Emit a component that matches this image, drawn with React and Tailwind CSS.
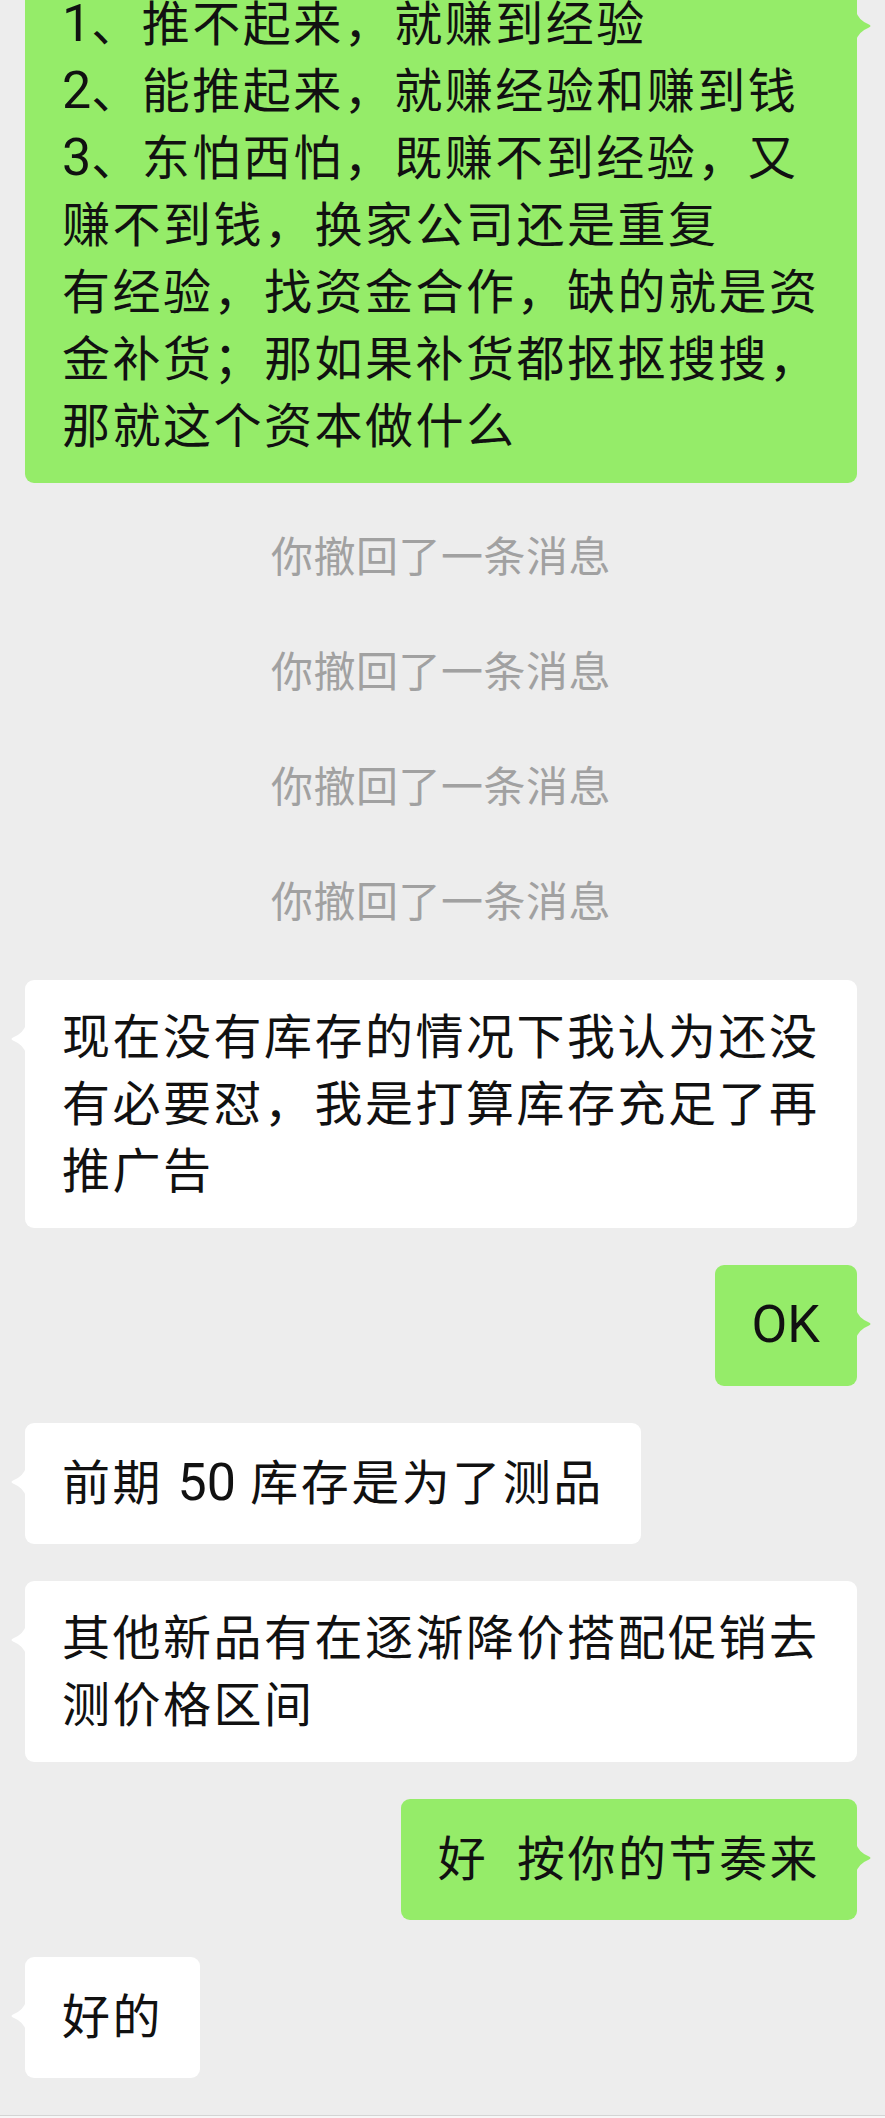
import React from "react";

// bubble tail, drawn as a little concave arrow
function Tail({ mine }) {
  if (mine) {
    return (
      <svg className="absolute top-[44px] -right-[15px]" width="16" height="30" viewBox="0 0 16 30">
        <path d="M0 0 Q2 9 13 13.5 Q16 15 13 16.5 Q2 21 0 30 Z" fill="#95ec69" />
      </svg>
    );
  }
  return (
    <svg className="absolute top-[44px] -left-[15px]" width="16" height="30" viewBox="0 0 16 30">
      <path d="M16 0 Q14 9 3 13.5 Q0 15 3 16.5 Q14 21 16 30 Z" fill="#ffffff" />
    </svg>
  );
}

// latin runs are a touch bigger and not spaced out
function L({ children }) {
  return <span className="text-[52px] leading-none tracking-normal">{children}</span>;
}

function Bubble({ mine, single, className = "", children }) {
  return (
    <div
      className={`relative max-w-[834px] rounded-[9px] px-[37px] py-[23.5px] text-[48px] leading-[67px] tracking-[2.5px] text-[#111111] ${
        mine ? "self-end bg-[#95ec69]" : "self-start bg-white"
      } ${single ? "min-h-[121px] flex items-center" : ""} ${className}`}
    >
      <Tail mine={mine} />
      {single ? <div>{children}</div> : children}
    </div>
  );
}

function Recalled() {
  return (
    <div className="h-[115px] flex items-center justify-center text-[42px] tracking-[0.5px] text-[#a1a1a1]">
      你撤回了一条消息
    </div>
  );
}

export default function App() {
  return (
    <div className="w-full overflow-hidden bg-[#ededed] font-['Roboto','Noto_Sans_CJK_SC',sans-serif]">
      <div className="flex flex-col pl-[25px] pr-[28px]">
        {/* top message, cut off by the screen edge */}
        <Bubble mine className="-mt-[33px]">
          <div>
            <L>1</L>、推不起来，就赚到经验
          </div>
          <div>
            <L>2</L>、能推起来，就赚经验和赚到钱
          </div>
          <div>
            <L>3</L>、东怕西怕，既赚不到经验，又赚不到钱，换家公司还是重复
          </div>
          <div>有经验，找资金合作，缺的就是资金补货；那如果补货都抠抠搜搜，那就这个资本做什么</div>
        </Bubble>

        <div className="mt-[17px] mb-[20px] flex flex-col">
          <Recalled />
          <Recalled />
          <Recalled />
          <Recalled />
        </div>

        <Bubble>现在没有库存的情况下我认为还没有必要怼，我是打算库存充足了再推广告</Bubble>

        <Bubble mine single className="mt-[37px]">
          <L>OK</L>
        </Bubble>

        <Bubble single className="mt-[37px]">
          前期 <L>50</L> 库存是为了测品
        </Bubble>

        <Bubble className="mt-[37px]">其他新品有在逐渐降价搭配促销去测价格区间</Bubble>

        <Bubble mine single className="mt-[37px]">
          {"好\u00a0\u00a0按你的节奏来"}
        </Bubble>

        <Bubble single className="mt-[37px] mb-[37px]">
          好的
        </Bubble>
      </div>

      {/* input bar edge */}
      <div className="h-[3px] border-t border-[#d4d4d4] bg-[#f7f7f7]"></div>
    </div>
  );
}
